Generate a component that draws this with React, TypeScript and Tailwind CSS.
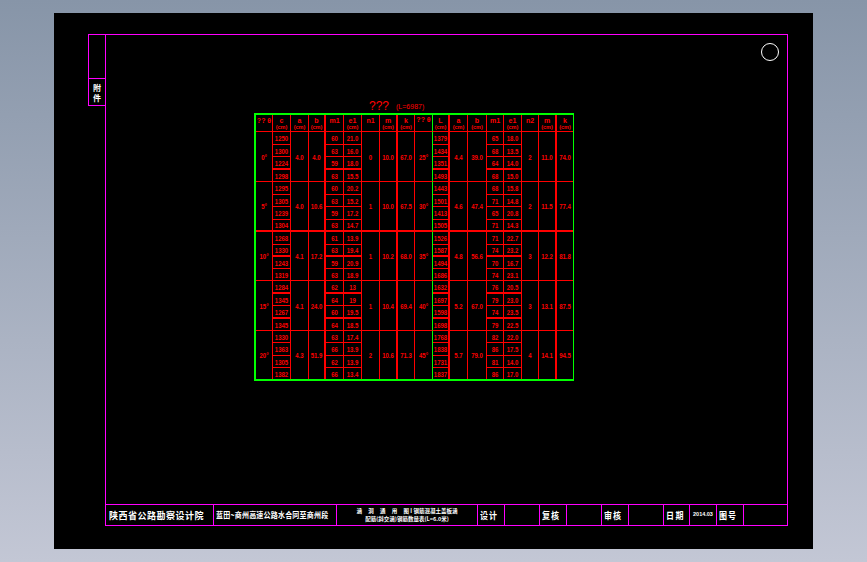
import React from "react";

const R = "[font-family:'Liberation_Sans',sans-serif]";

type Group = {
  a1: string; c: string[]; a: string; b: string; m1: string[]; e1: string[]; n1: string; m: string; k: string;
  a2: string; l: string[]; a3: string; b3: string; m2: string[]; e2: string[]; n2: string; m3: string; k3: string;
  thick: boolean[];
  last?: boolean;
};

const groups: Group[] = [
  { a1: "0°", c: ["1250", "1300", "1224", "1298"], a: "4.0", b: "4.0", m1: ["60", "63", "59", "63"], e1: ["21.0", "16.0", "18.0", "15.5"], n1: "0", m: "10.0", k: "67.0",
    a2: "25°", l: ["1379", "1434", "1351", "1493"], a3: "4.4", b3: "39.0", m2: ["65", "68", "64", "68"], e2: ["18.0", "13.5", "14.0", "15.0"], n2: "2", m3: "11.0", k3: "74.0", thick: [false, false, true, false] },
  { a1: "5°", c: ["1295", "1305", "1239", "1304"], a: "4.0", b: "10.6", m1: ["60", "63", "59", "63"], e1: ["20.2", "15.2", "17.2", "14.7"], n1: "1", m: "10.0", k: "67.5",
    a2: "30°", l: ["1443", "1501", "1413", "1505"], a3: "4.6", b3: "47.4", m2: ["68", "71", "65", "71"], e2: ["15.8", "14.8", "20.8", "14.3"], n2: "2", m3: "11.5", k3: "77.4", thick: [false, false, false, true] },
  { a1: "10°", c: ["1268", "1330", "1243", "1319"], a: "4.1", b: "17.2", m1: ["61", "63", "59", "63"], e1: ["13.9", "19.4", "20.9", "18.9"], n1: "1", m: "10.2", k: "68.0",
    a2: "35°", l: ["1526", "1587", "1494", "1686"], a3: "4.8", b3: "56.6", m2: ["71", "74", "70", "74"], e2: ["22.7", "23.2", "16.7", "23.1"], n2: "3", m3: "12.2", k3: "81.8", thick: [false, true, false, false] },
  { a1: "15°", c: ["1284", "1345", "1267", "1345"], a: "4.1", b: "24.0", m1: ["62", "64", "60", "64"], e1: ["13", "19", "19.5", "18.5"], n1: "1", m: "10.4", k: "69.4",
    a2: "40°", l: ["1632", "1697", "1598", "1698"], a3: "5.2", b3: "67.0", m2: ["76", "79", "74", "79"], e2: ["20.5", "23.0", "23.5", "22.5"], n2: "3", m3: "13.1", k3: "87.5", thick: [true, false, true, false] },
  { a1: "20°", c: ["1330", "1363", "1305", "1382"], a: "4.3", b: "51.9", m1: ["63", "66", "62", "66"], e1: ["17.4", "13.9", "13.9", "13.4"], n1: "2", m: "10.6", k: "71.3",
    a2: "45°", l: ["1768", "1838", "1731", "1837"], a3: "5.7", b3: "79.0", m2: ["82", "86", "81", "86"], e2: ["22.0", "17.5", "14.0", "17.0"], n2: "4", m3: "14.1", k3: "94.5", thick: [false, false, false, false], last: true },
];

function Txt({ children }: { children: React.ReactNode }) {
  return <span className="inline-block scale-y-[1.3] text-[6px] leading-none font-bold whitespace-nowrap text-[#ff0000]">{children}</span>;
}

function Span4({ v, cls, last, groupThick }: { v: string; cls: string; last?: boolean; groupThick?: boolean }) {
  return (
    <div className={`row-span-4 flex items-center justify-center border-[#ff0000] ${cls} ${last ? "" : groupThick ? "border-b-2" : "border-b"}`}>
      <Txt>{v}</Txt>
    </div>
  );
}

function Sub({ v, cls, row, g }: { v: string; cls: string; row: number; g: Group }) {
  const bottom = row === 3 ? (g.last ? "" : g.a1 === "5°" ? "border-b-2" : "border-b") : g.thick[row] ? "border-b-2" : "border-b";
  return (
    <div className={`flex items-center justify-center border-[#ff0000] ${cls} ${bottom}`}>
      <Txt>{v}</Txt>
    </div>
  );
}

function Head({ t, u, cls }: { t: string; u?: string; cls: string }) {
  return (
    <div className={`flex flex-col items-center justify-between border-b border-[#ff0000] pt-[2px] pb-[1px] ${cls}`}>
      <span className="text-[7px] leading-[7px] font-bold whitespace-nowrap text-[#ff0000]">{t}</span>
      {u ? <span className="text-[5.5px] leading-[6px] font-bold whitespace-nowrap text-[#ff0000]">{u}</span> : null}
    </div>
  );
}

function Table() {
  return (
    <div className={`ml-[148px] box-content grid w-[317px] grid-cols-[17px_18px_18px_17px_18px_18px_18px_18px_17px_18px_17px_18px_19px_17px_18px_17px_18px_16px] grid-rows-[17px_13px_12px_13px_12px_13px_12px_13px_12px_13px_12px_12px_12px_13px_12px_13px_12px_12px_13px_12px_11px] border-t-2 border-r border-b-2 border-l-2 border-[#00ff00] ${R}`}>
      <Head t="?? θ" cls="border-r" />
      <Head t="c" u="(cm)" cls="border-r" />
      <Head t="a" u="(cm)" cls="border-r" />
      <Head t="b" u="(cm)" cls="border-r-2" />
      <Head t="m1" cls="border-r" />
      <Head t="e1" u="(cm)" cls="border-r" />
      <Head t="n1" cls="border-r" />
      <Head t="m" u="(cm)" cls="border-r-2" />
      <Head t="k" u="(cm)" cls="border-r" />
      <div className="flex justify-center border-r border-b border-r-[#00ff00] border-b-[#ff0000] pt-[1px]">
        <span className="text-[7px] leading-[7px] font-bold whitespace-nowrap text-[#ff0000]">?? θ</span>
      </div>
      <Head t="L" u="(cm)" cls="border-r-2" />
      <Head t="a" u="(cm)" cls="border-r" />
      <Head t="b" u="(cm)" cls="border-r" />
      <Head t="m1" cls="border-r" />
      <Head t="e1" u="(cm)" cls="border-r" />
      <Head t="n2" cls="border-r" />
      <Head t="m" u="(cm)" cls="border-r-2" />
      <Head t="k" u="(cm)" cls="" />
      {groups.map((g) => {
        const gt = g.a1 === "5°";
        return (
          <React.Fragment key={g.a1}>
            <Span4 v={g.a1} cls="border-r" last={g.last} groupThick={gt} />
            <Sub v={g.c[0]} cls="border-r" row={0} g={g} />
            <Span4 v={g.a} cls="border-r" last={g.last} groupThick={gt} />
            <Span4 v={g.b} cls="border-r-2" last={g.last} groupThick={gt} />
            <Sub v={g.m1[0]} cls="border-r" row={0} g={g} />
            <Sub v={g.e1[0]} cls="border-r" row={0} g={g} />
            <Span4 v={g.n1} cls="border-r" last={g.last} groupThick={gt} />
            <Span4 v={g.m} cls="border-r-2" last={g.last} groupThick={gt} />
            <Span4 v={g.k} cls="border-r" last={g.last} groupThick={gt} />
            <div className={`row-span-4 flex items-center justify-center border-r border-r-[#00ff00] border-b-[#ff0000] ${g.last ? "" : gt ? "border-b-2" : "border-b"}`}>
              <Txt>{g.a2}</Txt>
            </div>
            <Sub v={g.l[0]} cls="border-r-2" row={0} g={g} />
            <Span4 v={g.a3} cls="border-r" last={g.last} groupThick={gt} />
            <Span4 v={g.b3} cls="border-r" last={g.last} groupThick={gt} />
            <Sub v={g.m2[0]} cls="border-r" row={0} g={g} />
            <Sub v={g.e2[0]} cls="border-r" row={0} g={g} />
            <Span4 v={g.n2} cls="border-r" last={g.last} groupThick={gt} />
            <Span4 v={g.m3} cls="border-r-2" last={g.last} groupThick={gt} />
            <Span4 v={g.k3} cls="" last={g.last} groupThick={gt} />
            {[1, 2, 3].map((i) => (
              <React.Fragment key={i}>
                <Sub v={g.c[i]} cls="border-r" row={i} g={g} />
                <Sub v={g.m1[i]} cls="border-r" row={i} g={g} />
                <Sub v={g.e1[i]} cls="border-r" row={i} g={g} />
                <Sub v={g.l[i]} cls="border-r-2" row={i} g={g} />
                <Sub v={g.m2[i]} cls="border-r" row={i} g={g} />
                <Sub v={g.e2[i]} cls="border-r" row={i} g={g} />
              </React.Fragment>
            ))}
          </React.Fragment>
        );
      })}
    </div>
  );
}

const CJK = "[font-family:'Noto_Sans_CJK_SC',sans-serif]";

function Label({ t, w, gap }: { t: string; w: string; gap?: string }) {
  return (
    <div className={`flex h-full items-center border-r border-[#ff00ff] pl-[2px] ${w}`}>
      <span className={`inline-block scale-y-[1.2] text-[8px] leading-none font-bold whitespace-nowrap text-white ${gap ?? "tracking-[1px]"}`}>{t}</span>
    </div>
  );
}

function Blank({ w }: { w: string }) {
  return <div className={`h-full border-r border-[#ff00ff] ${w}`} />;
}

export default function App() {
  return (
    <div className="h-[562px] w-[867px] overflow-hidden bg-gradient-to-b from-[#8795a8] to-[#c3c7d5] pt-[13px] pl-[54px]">
      <div className="h-[536px] w-[759px] bg-black pt-[21px] pl-[34px]">
        <div className={`flex h-[492px] w-[700px] items-start ${CJK}`}>
          <div className="flex h-[72px] w-[17px] flex-col border-y border-l border-[#ff00ff]">
            <div className="h-[44px] border-b border-[#ff00ff]" />
            <div className="flex flex-1 flex-col items-center justify-center gap-[1px] text-[8px] leading-[9px] font-bold text-white">
              <span>附</span>
              <span>件</span>
            </div>
          </div>
          <div className="relative flex h-[492px] w-[683px] flex-col border border-[#ff00ff]">
            <div className="absolute top-[8px] right-[8px] h-[18px] w-[18px] rounded-full border border-white" />
            <div className="flex-1 pt-[64px]">
              <div className={`ml-[263px] flex h-[14px] items-center gap-[7px] text-[#ff0000] ${R}`}>
                <span className="text-[12px] leading-none">???</span>
                <span className="text-[7px] leading-none">(L=6987)</span>
              </div>
              <Table />
            </div>
            <div className="flex h-[21px] shrink-0 border-t border-[#ff00ff]">
              <div className="flex h-full w-[108px] items-center border-r border-[#ff00ff] pl-[3px]">
                <span className="text-[9px] leading-none font-bold tracking-[0.5px] whitespace-nowrap text-white">陕西省公路勘察设计院</span>
              </div>
              <div className="flex h-full w-[123px] items-center border-r border-[#ff00ff] pl-[2px]">
                <span className="inline-block scale-y-[1.2] text-[7px] leading-none font-bold tracking-[0.2px] whitespace-nowrap text-white">蓝田~商州高速公路水合同至商州段</span>
              </div>
              <div className="flex h-full w-[141px] flex-col items-center justify-center gap-[1px] border-r border-[#ff00ff] text-[5.5px] leading-[7px] font-bold whitespace-nowrap text-white">
                <span className="whitespace-pre">涵     洞     通     用     图 I 钢筋混凝土盖板涵</span>
                <span>配筋(斜交涵)钢筋数量表(L=6.0米)</span>
              </div>
              <Label t="设计" w="w-[27px]" />
              <Blank w="w-[35px]" />
              <Label t="复核" w="w-[27px]" />
              <Blank w="w-[35px]" />
              <Label t="审核" w="w-[27px]" />
              <Blank w="w-[35px]" />
              <Label t="日期" w="w-[26px]" gap="tracking-[1.5px]" />
              <div className={`flex h-full w-[27px] items-center justify-center border-r border-[#ff00ff] text-[5.5px] leading-none font-bold text-white ${R}`}>2014.03</div>
              <Label t="图号" w="w-[27px]" />
              <div className="h-full flex-1" />
            </div>
          </div>
        </div>
      </div>
    </div>
  );
}
